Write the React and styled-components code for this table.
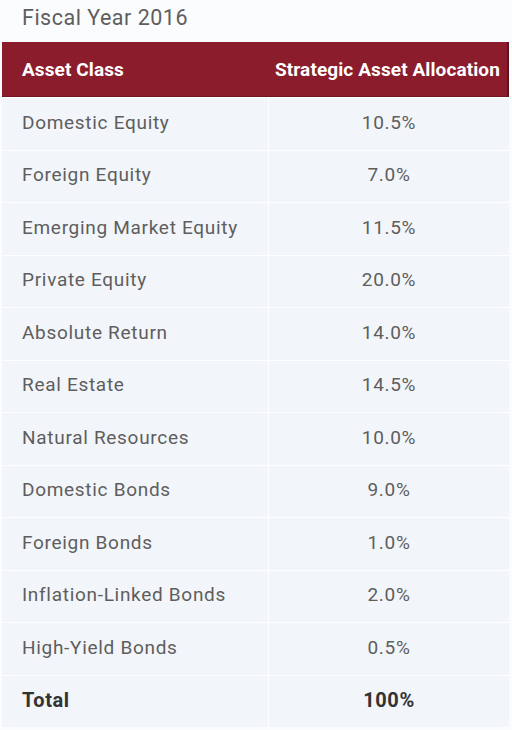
import React from "react"
import styled, { createGlobalStyle } from "styled-components"

const rows = [
  ["Domestic Equity", "10.5%"],
  ["Foreign Equity", "7.0%"],
  ["Emerging Market Equity", "11.5%"],
  ["Private Equity", "20.0%"],
  ["Absolute Return", "14.0%"],
  ["Real Estate", "14.5%"],
  ["Natural Resources", "10.0%"],
  ["Domestic Bonds", "9.0%"],
  ["Foreign Bonds", "1.0%"],
  ["Inflation-Linked Bonds", "2.0%"],
  ["High-Yield Bonds", "0.5%"],
]

const App = () => (
  <>
    <GlobalStyle />
    <Page>
      <Title>Fiscal Year 2016</Title>
      <Table>
        <HeadRow>
          <HeadCell>Asset Class</HeadCell>
          <HeadCell $center>Strategic Asset Allocation</HeadCell>
        </HeadRow>
        {rows.map(([name, value]) => (
          <Row key={name}>
            <Cell>{name}</Cell>
            <Cell $center>{value}</Cell>
          </Row>
        ))}
        <Row>
          <Cell $bold>Total</Cell>
          <Cell $center $bold>100%</Cell>
        </Row>
      </Table>
    </Page>
  </>
)
export default App

const GlobalStyle = createGlobalStyle`
  body {
    margin: 0;
    background: #ffffff;
    font-family: Roboto, "Liberation Sans", sans-serif;
  }
`

const Page = styled.div`
  width: 512px;
  height: 730px;
  overflow: hidden;
  background: #fbfcfe;
`

const Title = styled.h1`
  margin: 0;
  height: 42px;
  padding: 5px 0 0 22px;
  box-sizing: border-box;
  font-size: 21.5px;
  font-weight: 400;
  color: #5e5e5e;
  letter-spacing: 0.5px;
`

const Table = styled.div`
  margin: 0 3px 0 2px;
  display: flex;
  flex-direction: column;
  gap: 1px;
  background: #fdfeff;
`

const HeadRow = styled.div`
  display: grid;
  grid-template-columns: 266px 1fr;
  height: 55px;
  align-items: center;
  background: #8b1c2c;
  border-right: 2px solid #5e1420;
  border-bottom: 1px solid #6e1622;
  box-sizing: border-box;
`

const HeadCell = styled.div`
  color: #ffffff;
  font-size: 19px;
  font-weight: 700;
  padding-left: ${(p) => (p.$center ? "0" : "20px")};
  padding-right: ${(p) => (p.$center ? "0" : "0")};
  text-align: ${(p) => (p.$center ? "center" : "left")};
  letter-spacing: 0.1px;
`

const Row = styled.div`
  display: grid;
  grid-template-columns: 266px 1fr;
  gap: 1px;
  height: 51.5px;
`

const Cell = styled.div`
  display: flex;
  align-items: center;
  justify-content: ${(p) => (p.$center ? "center" : "flex-start")};
  padding-left: ${(p) => (p.$center ? "0" : "20px")};
  padding-bottom: 3px;
  background: #f2f5f9;
  color: ${(p) => (p.$bold ? "#333333" : "#5e5e5e")};
  font-size: ${(p) => (p.$bold ? "20px" : "19px")};
  font-weight: ${(p) => (p.$bold ? 700 : 400)};
  letter-spacing: ${(p) => (p.$bold ? "0.6px" : "0.7px")};
`
